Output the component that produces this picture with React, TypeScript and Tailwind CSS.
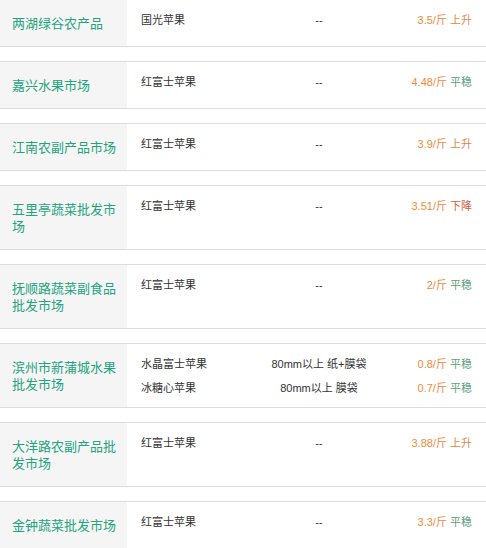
const rows = [
  { market: "两湖绿谷农产品", items: [{ name: "国光苹果", spec: "--", price: "3.5/斤", trend: "上升" }] },
  { market: "嘉兴水果市场", items: [{ name: "红富士苹果", spec: "--", price: "4.48/斤", trend: "平稳" }] },
  { market: "江南农副产品市场", items: [{ name: "红富士苹果", spec: "--", price: "3.9/斤", trend: "上升" }] },
  { market: "五里亭蔬菜批发市场", items: [{ name: "红富士苹果", spec: "--", price: "3.51/斤", trend: "下降" }] },
  { market: "抚顺路蔬菜副食品批发市场", items: [{ name: "红富士苹果", spec: "--", price: "2/斤", trend: "平稳" }] },
  {
    market: "滨州市新蒲城水果批发市场",
    items: [
      { name: "水晶富士苹果", spec: "80mm以上 纸+膜袋", price: "0.8/斤", trend: "平稳" },
      { name: "冰糖心苹果", spec: "80mm以上 膜袋", price: "0.7/斤", trend: "平稳" },
    ],
  },
  { market: "大洋路农副产品批发市场", items: [{ name: "红富士苹果", spec: "--", price: "3.88/斤", trend: "上升" }] },
  { market: "金钟蔬菜批发市场", items: [{ name: "红富士苹果", spec: "--", price: "3.3/斤", trend: "平稳" }] },
];

const trendColor: Record<string, string> = {
  上升: "text-[#de8a4a]",
  平稳: "text-[#5c9f7c]",
  下降: "text-[#d0623e]",
};

export default function App() {
  return (
    <div
      className="w-[486px] bg-white -mt-px"
      style={{ fontFamily: '"Liberation Sans", "Noto Sans CJK SC", sans-serif' }}
    >
      {rows.map((row) => (
        <div
          key={row.market}
          className="flex border-y border-[#dcdcdc] mb-[14px]"
        >
          <div className="w-[127px] shrink-0 bg-[#f5f5f5] pl-[12px] pr-[10px] pt-[15px] pb-[14px] flex items-center">
            <span className="text-[13px] leading-[17px] text-[#23a47d]">{row.market}</span>
          </div>
          <div className="flex-1 pt-2 pl-[14px] pr-[14px]">
            {row.items.map((item) => (
              <div key={item.name} className="flex h-6 items-center text-[11px] text-[#333]">
                <div className="w-[118px]">{item.name}</div>
                <div className="w-[120px] text-center">{item.spec}</div>
                <div className="flex-1 text-right">
                  <span className="text-[#f08a3c]">{item.price}</span>{" "}
                  <span className={trendColor[item.trend]}>{item.trend}</span>
                </div>
              </div>
            ))}
          </div>
        </div>
      ))}
    </div>
  );
}
